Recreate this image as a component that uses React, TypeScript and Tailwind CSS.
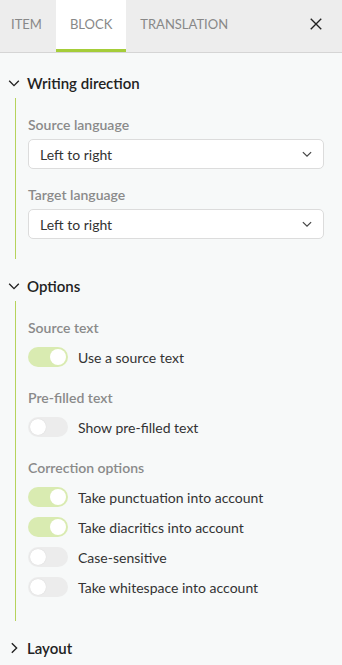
import { useState } from 'react';

function ChevronDown({ className }: { className?: string }) {
  return (
    <svg viewBox="0 0 16 16" className={className} fill="none" stroke="currentColor" strokeWidth={1.6}>
      <path d="M2.5 5.5 8 11l5.5-5.5" />
    </svg>
  );
}

function ChevronRight({ className }: { className?: string }) {
  return (
    <svg viewBox="0 0 16 16" className={className} fill="none" stroke="currentColor" strokeWidth={1.6}>
      <path d="M5.5 2.5 11 8l-5.5 5.5" />
    </svg>
  );
}

function Toggle({ on, label }: { on: boolean; label: string }) {
  const [value, setValue] = useState(on);
  return (
    <button onClick={() => setValue(!value)} className="flex items-center h-[30px] gap-[10px] text-left">
      <span
        className={
          value
            ? 'relative w-10 h-5 rounded-full bg-[#d9ebb1] shrink-0'
            : 'relative w-10 h-5 rounded-full bg-[#ececec] shrink-0'
        }
      >
        <span
          className={
            value
              ? 'absolute top-[2px] left-[22px] w-4 h-4 rounded-full bg-white'
              : 'absolute top-[2px] left-[2px] w-4 h-4 rounded-full bg-white shadow-[0_0_1px_rgba(0,0,0,0.15)]'
          }
        />
      </span>
      <span className="text-[14px] text-[#333]">{label}</span>
    </button>
  );
}

function Select({ value }: { value: string }) {
  return (
    <div className="flex items-center justify-between h-[30px] rounded-[5px] border border-[#dcdcdc] bg-white pl-[11px] pr-[10px]">
      <span className="text-[14px] text-[#333]">{value}</span>
      <ChevronDown className="w-[12px] h-[12px] text-[#444]" />
    </div>
  );
}

function Label({ children }: { children: string }) {
  return <div className="text-[14px] font-semibold text-[#8a8a8a] h-[30px] flex items-center">{children}</div>;
}

function Section({
  title,
  open,
  bodyClass,
  children,
}: {
  title: string;
  open: boolean;
  bodyClass?: string;
  children?: React.ReactNode;
}) {
  return (
    <div>
      <div className="flex items-center h-[30px] gap-[6px] pl-[7px]">
        {open ? (
          <ChevronDown className="w-[14px] h-[14px] text-[#222]" />
        ) : (
          <ChevronRight className="w-[14px] h-[14px] text-[#222]" />
        )}
        <span className="text-[15px] font-semibold text-[#222]">{title}</span>
      </div>
      {open && <div className={'ml-[15px] border-l border-[#b6d35c] pl-[12px] pr-[18px] ' + bodyClass}>{children}</div>}
    </div>
  );
}

export default function App() {
  const tabs = ['ITEM', 'BLOCK', 'TRANSLATION'];
  return (
    <div className="w-[342px] h-[665px] bg-[#f7f9f9] overflow-hidden" style={{ fontFamily: 'Lato, sans-serif' }}>
      <div className="flex h-[53px] bg-[#ededed] border-b border-[#d5d5d5]">
        <div className="flex -ml-[3px]">
          {tabs.map((t) => (
            <div
              key={t}
              className={
                t === 'BLOCK'
                  ? 'h-full px-[14px] flex items-center bg-white border-b-[3px] border-[#a5cd39] text-[13px] text-[#888]'
                  : 'h-full px-[14px] flex items-center text-[13px] text-[#888] pb-[2px]'
              }
            >
              {t}
            </div>
          ))}
        </div>
        <div className="ml-auto w-[52px] flex items-center justify-center pb-[4px]">
          <svg viewBox="0 0 16 16" className="w-[14px] h-[14px]" fill="none" stroke="#222" strokeWidth={1.6}>
            <path d="M2 2l12 12M14 2 2 14" />
          </svg>
        </div>
      </div>

      <div className="pt-[15px] flex flex-col gap-[12px]">
        <Section title="Writing direction" open bodyClass="pt-[11px] pb-[20px]">
          <Label>Source language</Label>
          <Select value="Left to right" />
          <div className="h-[10px]" />
          <Label>Target language</Label>
          <Select value="Left to right" />
        </Section>

        <Section title="Options" open bodyClass="pt-[11px] pb-[19px]">
          <Label>Source text</Label>
          <Toggle on label="Use a source text" />
          <div className="h-[10px]" />
          <Label>Pre-filled text</Label>
          <Toggle on={false} label="Show pre-filled text" />
          <div className="h-[10px]" />
          <Label>Correction options</Label>
          <Toggle on label="Take punctuation into account" />
          <Toggle on label="Take diacritics into account" />
          <Toggle on={false} label="Case-sensitive" />
          <Toggle on={false} label="Take whitespace into account" />
        </Section>

        <Section title="Layout" open={false} />
      </div>
    </div>
  );
}
